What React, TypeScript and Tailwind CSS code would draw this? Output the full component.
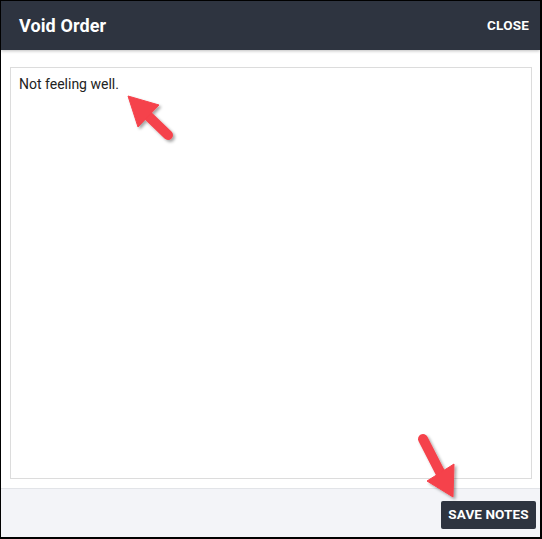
export default function App() {
  return (
    <div
      className="relative w-[542px] h-[539px] flex flex-col bg-white border-l border-t border-r-2 border-b-2 border-black overflow-hidden"
      style={{ fontFamily: 'Roboto, "Liberation Sans", sans-serif' }}
    >
      {/* Header */}
      <div className="relative z-10 h-[49px] shrink-0 bg-[#2e3440] pl-[18px] pr-[11px] flex items-center justify-between shadow-[0_1px_3px_rgba(0,0,0,0.25)]">
        <h2 className="text-[18px] font-bold text-white tracking-[0.1px]">Void Order</h2>
        <button className="text-[13.5px] font-bold text-white tracking-[0.2px]">CLOSE</button>
      </div>

      {/* Body */}
      <div className="flex-1 flex flex-col pt-[17px] pl-[9px] pr-[8px] pb-[9px]">
        <textarea
          readOnly
          defaultValue="Not feeling well."
          className="flex-1 w-full resize-none border border-[#dcdcdc] px-[8px] py-[6px] text-[14px] text-[#222] outline-none"
        />
      </div>

      {/* Footer */}
      <div className="h-[49px] shrink-0 bg-[#f3f4f8] border-t border-[#e2e4e8] flex items-center justify-end pr-[4px] pt-[3px]">
        <button className="h-[28px] w-[95px] rounded-[2px] bg-[#2e3440] text-white text-[13.5px] font-bold tracking-[0.1px]">
          SAVE NOTES
        </button>
      </div>

      {/* Annotation arrows */}
      <svg className="absolute inset-0 pointer-events-none" width="542" height="539" viewBox="-1 -1 542 539">
        <defs>
          <filter id="sh" x="-50%" y="-50%" width="200%" height="200%">
            <feDropShadow dx="2" dy="2" stdDeviation="1.5" floodColor="#000" floodOpacity="0.35" />
          </filter>
        </defs>
        <g filter="url(#sh)" fill="#f5424b" stroke="#f5424b">
          <line x1="166" y1="133" x2="140" y2="108" strokeWidth="10" strokeLinecap="round" />
          <polygon points="126,94 157,103 136,125" strokeWidth="1" strokeLinejoin="round" />
        </g>
        <g filter="url(#sh)" fill="#f5424b" stroke="#f5424b">
          <line x1="421" y1="437" x2="440" y2="474" strokeWidth="10" strokeLinecap="round" />
          <polygon points="451,495 425,479 452,462" strokeWidth="1" strokeLinejoin="round" />
        </g>
      </svg>
    </div>
  );
}
